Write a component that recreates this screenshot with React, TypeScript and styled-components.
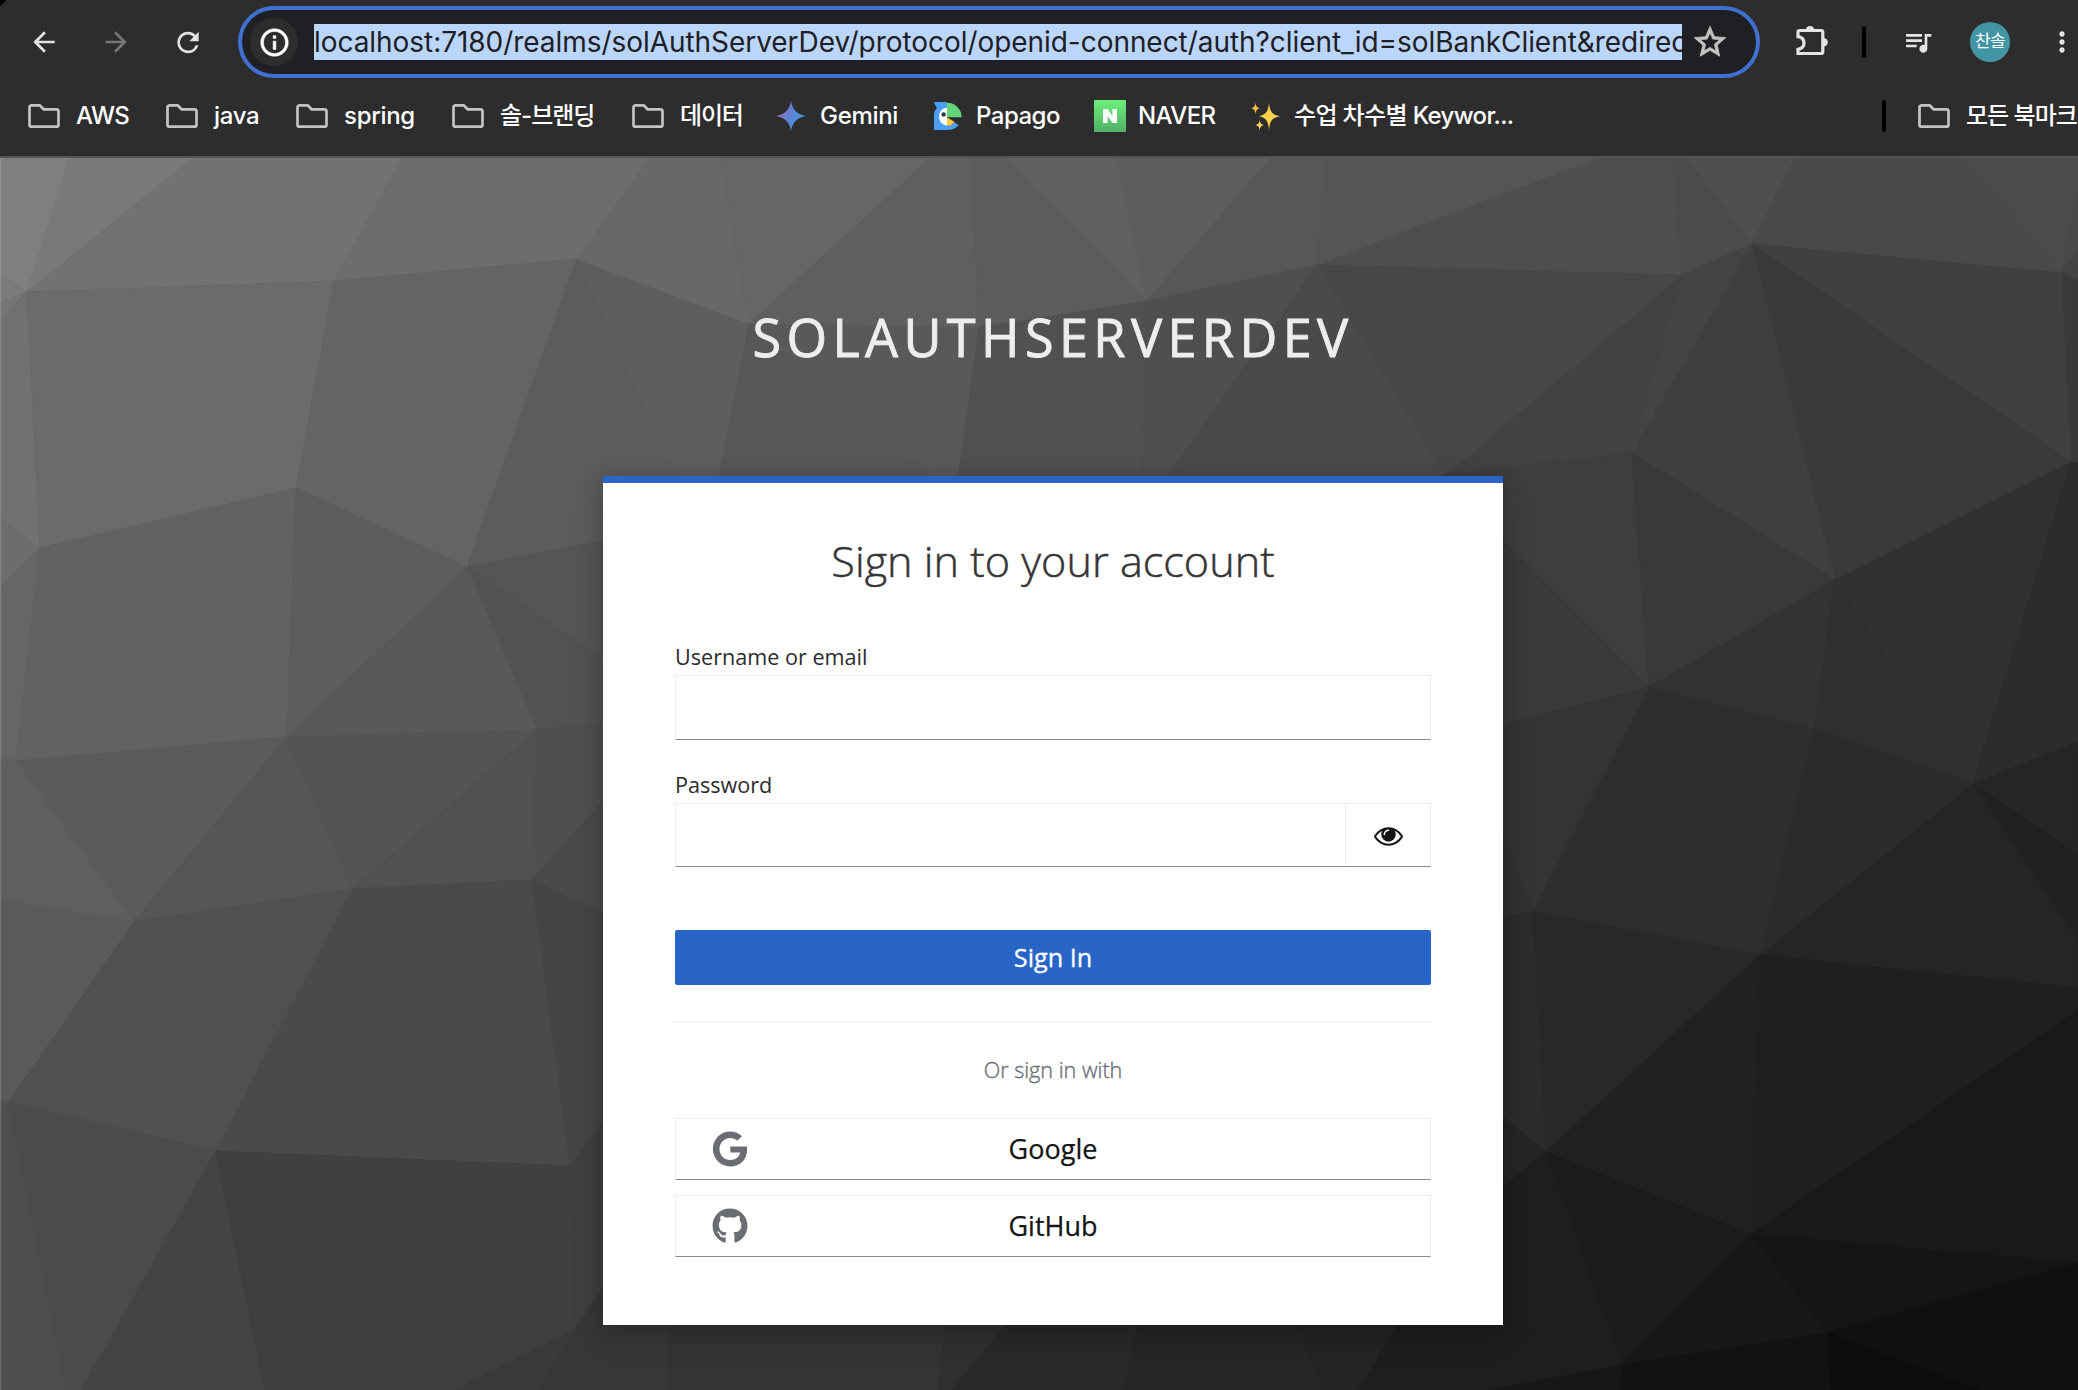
import React from "react";
import styled, { createGlobalStyle } from "styled-components";
import { FaGithub, FaGoogle } from "react-icons/fa";
import {
  MdArrowBack,
  MdArrowForward,
  MdInfoOutline,
  MdMoreVert,
  MdQueueMusic,
  MdRefresh,
  MdStarBorder,
} from "react-icons/md";

const uiFont = `Inter, "Noto Sans CJK KR", sans-serif`;
const pageFont = `"Open Sans", "Noto Sans CJK KR", sans-serif`;

const GlobalStyle = createGlobalStyle`
  * { box-sizing: border-box; }
  html, body { margin: 0; padding: 0; background: #2d2d2d; overflow: hidden; }
  button, input { font: inherit; margin: 0; padding: 0; }
`;

const Window = styled.div`
  width: 2078px;
  height: 1390px;
  display: flex;
  flex-direction: column;
  overflow: hidden;
`;

/* ---------- browser chrome ---------- */

const Chrome = styled.header`
  flex: none;
  height: 158px;
  background: linear-gradient(135deg, #000000 4px, #2d2d2d 5px);
  border-bottom: 2px solid #555555;
  font-family: ${uiFont};
`;

const Toolbar = styled.div`
  height: 84px;
  display: flex;
  align-items: center;
  padding-left: 28px;
`;

const ToolButton = styled.button<{ $dim?: boolean; $gap: number }>`
  flex: none;
  display: flex;
  align-items: center;
  justify-content: center;
  width: 32px;
  height: 32px;
  margin-right: ${(p) => p.$gap}px;
  border: 0;
  background: none;
  color: ${(p) => (p.$dim ? "#757575" : "#e3e3e3")};
`;

const AddressBar = styled.div`
  flex: none;
  width: 1522px;
  height: 72px;
  display: flex;
  align-items: center;
  padding-left: 8px;
  border: 4px solid #3f70d2;
  border-radius: 36px;
  background: #1f2024;
`;

const SiteInfo = styled.div`
  flex: none;
  width: 48px;
  height: 48px;
  display: flex;
  align-items: center;
  justify-content: center;
  border-radius: 50%;
  background: #2d2d2d;
  color: #ffffff;

  svg path:not([fill="none"]) {
    stroke: currentColor;
    stroke-width: 0.4px;
  }
`;

const Url = styled.div`
  flex: none;
  width: 1368px;
  height: 36px;
  margin: 0 9px 0 16px;
  overflow: hidden;
  background: #bad6fb;
  color: #1f2024;
  font-size: 28px;
  line-height: 36px;
  letter-spacing: -0.05px;
  white-space: nowrap;
`;

const StarButton = styled.div`
  display: flex;
  color: #c3c3c3;

  svg path:not([fill="none"]) {
    stroke: currentColor;
    stroke-width: 0.5px;
  }
`;

const Divider = styled.div<{ $left: number; $right: number }>`
  flex: none;
  width: 4px;
  height: 32px;
  margin: 0 ${(p) => p.$right}px 0 ${(p) => p.$left}px;
  border-radius: 2px;
  background: #000000;
`;

const ExtensionSlot = styled.div`
  flex: none;
  display: flex;
  width: 36px;
  margin-left: 34px;
`;

const Avatar = styled.div`
  flex: none;
  width: 40px;
  height: 40px;
  margin: 0 36px 0 36px;
  border-radius: 50%;
  background: #4296a4;
  color: #ffffff;
  font-size: 17px;
  line-height: 39px;
  letter-spacing: -0.6px;
  text-align: center;
`;

const Bookmarks = styled.nav`
  height: 64px;
  display: flex;
  align-items: center;
  padding-left: 28px;
`;

const Bookmark = styled.div<{ $width?: number; $gap?: number; $track?: number }>`
  flex: none;
  display: flex;
  align-items: center;
  gap: ${(p) => p.$gap ?? 16}px;
  width: ${(p) => (p.$width ? `${p.$width}px` : "auto")};
  color: #ffffff;
  font-size: 24px;
  font-weight: 500;
  line-height: 32px;
  letter-spacing: ${(p) => p.$track ?? -0.3}px;
  white-space: nowrap;
`;

const Glyph = styled.svg`
  flex: none;
  display: block;
`;

const Spacer = styled.div`
  flex: 1;
`;

const ExtensionIcon = () => (
  <Glyph width="36" height="40" viewBox="0 0 36 40">
    <path
      d="M5.500 9.500H27.300a1.500 1.500 0 0 1 1.500 1.500V31a1.500 1.500 0 0 1-1.500 1.500H4V28.300C8.500 27.500 10 24.800 10 22s-1.500-5.500-6-6.300V11a1.500 1.500 0 0 1 1.500-1.500z"
      fill="none"
      stroke="#e3e3e3"
      strokeWidth="3.200"
      transform="translate(0 -1)"
    />
    <path d="M12 8a4 4 0 0 1 8 0z" fill="#e3e3e3" />
    <path d="M29.500 16a4.300 4.300 0 0 1 0 8.600z" fill="#e3e3e3" />
  </Glyph>
);

const FolderIcon = () => (
  <Glyph width="32" height="32" viewBox="0 0 32 32">
    <path
      d="M3.5 5.3h8.2l3.9 4h12.9a2 2 0 0 1 2 2v13.4a2 2 0 0 1-2 2h-25a2 2 0 0 1-2-2V7.3a2 2 0 0 1 2-2z"
      fill="none"
      stroke="#c3c3c3"
      strokeWidth="2.7"
    />
  </Glyph>
);

const GeminiIcon = () => (
  <Glyph width="32" height="32" viewBox="0 0 32 32">
    <defs>
      <linearGradient id="gem" x1="0" x2="1" y1="0.3" y2="0.6">
        <stop offset="0" stopColor="#a06db4" />
        <stop offset="0.5" stopColor="#5b83d6" />
        <stop offset="1" stopColor="#45a0e0" />
      </linearGradient>
    </defs>
    <path
      d="M15 1C16.300 9.500 21.500 14.700 30 16 21.500 17.300 16.300 22.500 15 31 13.700 22.500 8.500 17.300 0 16 8.500 14.700 13.700 9.500 15 1z"
      fill="url(#gem)"
    />
  </Glyph>
);

const PapagoIcon = () => (
  <Glyph width="32" height="32" viewBox="0 0 32 32">
    <path d="M2 2H15V30H2V14Q2.500 10 5 8 3 5.500 2 2z" fill="#4a9ff5" />
    <path d="M14.500 30V25.300H19L22.500 22.500 26.800 25Q23 30 14.500 30z" fill="#4a9ff5" />
    <path d="M15 7.500a8 9 0 0 0 0 18z" fill="#ffffff" />
    <path d="M15 2.700a14.500 14.500 0 0 1 14.700 14.500H15z" fill="#63d477" />
    <path d="M15 17.200l7.700 4.800-3.700 3.500H15z" fill="#f7c844" />
    <circle cx="11.600" cy="14.500" r="2.200" fill="#2c3a4d" />
  </Glyph>
);

const NaverTile = styled.span`
  flex: none;
  width: 32px;
  height: 32px;
  display: flex;
  align-items: center;
  justify-content: center;
  border-radius: 1px;
  background: linear-gradient(#6df07a, #50b168);
`;

const SparkleIcon = () => (
  <Glyph width="32" height="32" viewBox="0 0 32 32">
    <path d="M19 2.500c.8 9 3 12.300 11 13.700-8 1.400-10.200 4.700-11 13.700-.8-9-3-12.300-10-13.700 7-1.400 9.200-4.700 10-13.700z" fill="#fbd34b" />
    <path d="M5.500 2c.4 4.200 1.300 5.500 4.500 6.300-3.200.8-4.100 2.100-4.500 6.300-.4-4.200-1.300-5.500-4.500-6.300 3.200-.8 4.100-2.100 4.500-6.300z" fill="#f6b94a" />
    <path d="M9.700 19.500c.4 3.700 1.300 4.700 4.300 5.500-3 .8-3.900 1.800-4.300 5.800-.4-4-1.300-5-4.300-5.800 3-.8 3.900-1.800 4.300-5.500z" fill="#f8cf55" />
  </Glyph>
);

/* ---------- faceted backdrop ---------- */

// Each facet: grey level, then the polygon's corners in window coordinates.
const facets: [string, string][] = [
  ["7f7f7f", "0,150 72,150 27,291 0,273"],
  ["7b7b7b", "0,273 27,291 0,302"],
  ["797979", "72,150 202,150 27,291"],
  ["727272", "202,150 406,150 334,280 27,291"],
  ["6d6d6d", "406,150 655,150 577,258 334,280"],
  ["757575", "0,302 27,291 0,320"],
  ["717171", "0,320 27,291 40,547 0,517"],
  ["6b6b6b", "27,291 334,280 296,487 40,547"],
  ["646464", "334,280 577,258 467,566 296,487"],
  ["6d6d6d", "0,517 40,547 0,586"],
  ["666666", "0,586 40,547 16,760 0,755"],
  ["626262", "40,547 296,487 287,736 16,760"],
  ["5d5d5d", "296,487 467,566 287,736"],
  ["5c5c5c", "577,258 690,500 650,531 467,566"],
  ["5e5e5e", "577,258 749,323 717,500 688,500"],
  ["555555", "467,566 650,531 650,690"],
  ["525252", "467,566 650,690 650,718 537,729"],
  ["595959", "467,566 537,729 287,736"],
  ["5b5b5b", "16,760 287,736 134,921"],
  ["606060", "0,755 16,760 0,772"],
  ["5f5f5f", "0,772 16,760 134,921 0,899"],
  ["565656", "287,736 353,888 134,921"],
  ["545454", "287,736 537,729 353,888"],
  ["515151", "537,729 532,879 353,888"],
  ["4f4f4f", "537,729 650,718 650,748 532,879"],
  ["4a4a4a", "532,879 650,748 650,935"],
  ["5a5a5a", "0,899 134,921 9,1101 0,1100"],
  ["525252", "0,1100 9,1101 0,1118"],
  ["515151", "134,921 9,1101 216,1150"],
  ["505050", "134,921 353,888 216,1150"],
  ["4a4a4a", "353,888 532,879 570,1165 216,1150"],
  ["454545", "532,879 650,935 650,1059 570,1165"],
  ["4e4e4e", "0,1118 9,1101 66,1390 0,1390"],
  ["4b4b4b", "9,1101 216,1150 81,1390 66,1390"],
  ["444444", "216,1150 81,1390 265,1390"],
  ["3f3f3f", "216,1150 265,1390 453,1390 576,1328"],
  ["404040", "216,1150 570,1165 576,1328"],
  ["3f3f3f", "570,1165 650,1059 650,1214 576,1328"],
  ["3a3a3a", "453,1390 576,1328 538,1390"],
  ["373737", "538,1390 576,1328 650,1214 669,1300 668,1390"],
  ["343434", "669,1300 949,1300 938,1390 668,1390"],
  ["303030", "949,1300 1026,1300 951,1390 938,1390"],
  ["292929", "1026,1300 1142,1300 1124,1390 951,1390"],
  ["262626", "1142,1300 1286,1300 1325,1390 1124,1390"],
  ["242424", "1286,1300 1413,1300 1358,1390 1325,1390"],
  ["1e1e1e", "1413,1300 1622,1300 1622,1364 1486,1390 1358,1390"],
  ["686868", "655,150 719,150 749,323 577,258"],
  ["666666", "719,150 938,150 749,323"],
  ["5f5f5f", "938,150 971,150 979,327 749,323"],
  ["5c5c5c", "971,150 998,150 1147,300 979,327"],
  ["606060", "998,150 1117,150 1147,300"],
  ["5d5d5d", "1117,150 1277,150 1147,300"],
  ["575757", "1277,150 1328,150 1317,264 1147,300"],
  ["4e4e4e", "1540,150 1672,150 1682,274 1317,264 1440,200"],
  ["555555", "1328,150 1618,150 1596,158 1480,201 1317,264"],
  ["4b4b4b", "1672,150 1681,150 1752,243 1682,274"],
  ["4f4f4f", "1681,150 1799,150 1752,243"],
  ["494949", "1799,150 1957,150 2061,272 1752,243"],
  ["4b4b4b", "1957,150 2078,150 2078,190 2061,272"],
  ["494949", "2078,190 2078,248 2061,272"],
  ["434343", "2061,272 2078,248 2078,279"],
  ["393939", "2061,272 2078,279 2078,462 2071,461"],
  ["404040", "1752,243 2061,272 2071,461"],
  ["3a3a3a", "1752,243 2071,461 1835,579"],
  ["3f3f3f", "1752,243 1835,579 1632,452"],
  ["444444", "1682,274 1752,243 1632,452"],
  ["424242", "1682,274 1632,452 1445,475 1440,472"],
  ["474747", "1317,264 1682,274 1480,445 1443,476"],
  ["575757", "749,323 940,475 940,500 714,500"],
  ["595959", "749,323 979,327 955,500 940,480"],
  ["515151", "979,327 1147,300 1141,500 955,500"],
  ["4f4f4f", "1147,300 1317,264 1150,500 1141,500"],
  ["4a4a4a", "1317,264 1443,474 1443,500 1150,500"],
  ["3e3e3e", "1443,474 1632,452 1649,686 1440,478"],
  ["3a3a3a", "1480,516 1649,686 1480,730"],
  ["393939", "1632,452 1835,579 1649,686"],
  ["333333", "1649,686 1835,579 1814,728"],
  ["2f2f2f", "1835,579 1973,783 1814,728"],
  ["313131", "1835,579 2071,461 1973,783"],
  ["2c2c2c", "2071,461 2078,462 2078,741 1973,783"],
  ["252525", "1973,783 2078,741 2078,854"],
  ["212121", "1973,783 2078,854 2078,940"],
  ["252525", "1973,783 2078,940 2078,987 1760,954"],
  ["2b2b2b", "1814,728 1973,783 1760,954"],
  ["2e2e2e", "1649,686 1814,728 1760,954 1533,910"],
  ["343434", "1480,730 1649,686 1533,910 1480,780"],
  ["323232", "1480,780 1533,910 1480,921"],
  ["2c2c2c", "1533,910 1546,1151 1480,1097 1480,921"],
  ["282828", "1533,910 1760,954 1546,1151"],
  ["252525", "1480,1097 1546,1151 1480,1205"],
  ["212121", "1760,954 1546,1151 1751,1233"],
  ["1f1f1f", "1760,954 2078,987 2078,1009 1751,1233"],
  ["191919", "1751,1233 2078,1009 2078,1262"],
  ["1b1b1b", "1546,1151 1751,1233 1622,1364"],
  ["1e1e1e", "1480,1205 1546,1151 1622,1364 1480,1310"],
  ["181818", "1751,1233 1827,1332 1622,1364"],
  ["151515", "1751,1233 2078,1262 1827,1332"],
  ["101010", "1827,1332 2078,1262 2078,1390 1982,1390"],
  ["0c0c0c", "1827,1332 1982,1390 1831,1390"],
  ["121212", "1827,1332 1831,1390 1620,1390 1622,1364"],
  ["171717", "1622,1364 1620,1390 1486,1390"],
];

const Page = styled.main`
  position: relative;
  flex: 1;
  display: flex;
  flex-direction: column;
  align-items: center;
  padding: 143px 0 0 28px;
  font-family: ${pageFont};
`;

const BackdropSvg = styled.svg`
  position: absolute;
  inset: 0;
  width: 100%;
  height: 100%;
`;

const Backdrop = () => (
  <BackdropSvg viewBox="0 157 2078 1232" preserveAspectRatio="none">
    {facets.map(([tone, points], i) => (
      <polygon key={i} points={points} fill={`#${tone}`} stroke={`#${tone}`} strokeWidth="0.8" />
    ))}
    <rect x="0" y="157" width="1.200" height="1233" fill="#ffffff" opacity="0.16" />
  </BackdropSvg>
);

const RealmName = styled.div`
  position: relative;
  height: 72px;
  color: #ededed;
  font-size: 52.2px;
  line-height: 72px;
  letter-spacing: 5.4px;
  text-transform: uppercase;
  white-space: nowrap;
  -webkit-text-stroke: 0.9px #ededed;
`;

const Card = styled.section`
  position: relative;
  width: 900px;
  height: 849px;
  margin-top: 103px;
  padding: 50px 72px 0;
  border-top: 7px solid #2965c7;
  background: #ffffff;
  box-shadow: 0 14px 29px rgba(3, 3, 3, 0.16), 0 0 20px rgba(3, 3, 3, 0.14);
  color: #2c2c2c;
`;

const CardTitle = styled.h1`
  height: 56px;
  margin: 0 0 53px;
  color: #363636;
  font-size: 43.2px;
  font-weight: 300;
  line-height: 56px;
  text-align: center;
  -webkit-text-stroke: 0.5px #363636;
`;

const Field = styled.div<{ $after: number }>`
  display: flex;
  flex-direction: column;
  gap: 3px;
  margin-bottom: ${(p) => p.$after}px;
`;

const Label = styled.label`
  height: 30px;
  font-size: 21.6px;
  line-height: 30px;
`;

const InputRow = styled.div<{ $height: number }>`
  display: flex;
  height: ${(p) => p.$height}px;
  border: 1px solid #ededed;
  border-bottom-color: #8a8d90;
`;

const TextInput = styled.input`
  flex: 1;
  min-width: 0;
  border: 0;
  background: #ffffff;
`;

const RevealButton = styled.button`
  width: 85px;
  display: flex;
  align-items: center;
  justify-content: center;
  padding-top: 2px;
  border: 0;
  border-left: 1px solid #ededed;
  background: #ffffff;
`;

const SubmitButton = styled.button`
  display: block;
  width: 100%;
  height: 55px;
  border: 0;
  border-radius: 2px;
  background: #2965c7;
  color: #ffffff;
  font-size: 25.2px;
  line-height: 55px;
  -webkit-text-stroke: 0.3px #ffffff;
`;

const Rule = styled.hr`
  height: 1px;
  margin: 36px 0 33px;
  border: 0;
  background: #ededed;
`;

const SocialCaption = styled.h2`
  height: 30px;
  margin: 0 0 33px;
  color: #6a6e73;
  font-size: 21.6px;
  font-weight: 300;
  line-height: 30px;
  text-align: center;
  -webkit-text-stroke: 0.35px #6a6e73;
`;

const SocialList = styled.div`
  display: flex;
  flex-direction: column;
  gap: 15px;
`;

const SocialButton = styled.a`
  height: 62px;
  display: grid;
  grid-template-columns: 36px 1fr 36px;
  align-items: center;
  padding: 0 36px;
  border: 1px solid #ededed;
  border-bottom-color: #8a8d90;
  color: #151515;
  font-size: 27px;
  line-height: 58px;
  text-align: center;
  -webkit-text-stroke: 0.25px #151515;

  svg {
    color: #6a6e73;
  }
`;

const EyeIcon = () => (
  <Glyph width="29" height="29" viewBox="0 64 1792 1792">
    <path
      fill="#151515"
      d="M1664 960q-152-236-381-353 61 104 61 225 0 185-131.500 316.500t-316.500 131.500-316.500-131.500-131.500-316.500q0-121 61-225-229 117-381 353 133 205 333.500 326.500t434.500 121.500 434.500-121.500 333.500-326.500zm-720-384q0-20-14-34t-34-14q-125 0-214.500 89.500t-89.500 214.500q0 20 14 34t34 14 34-14 14-34q0-86 61-147t147-61q20 0 34-14t14-34zm848 384q0 34-20 69-140 230-376.500 368.500t-499.500 138.500-499.500-139-376.500-368q-20-35-20-69t20-69q140-229 376.500-368t499.500-139 499.500 139 376.500 368q20 35 20 69z"
    />
  </Glyph>
);

const App = () => (
  <Window>
    <GlobalStyle />
    <Chrome>
      <Toolbar>
        <ToolButton $gap={40}><MdArrowBack size={34} /></ToolButton>
        <ToolButton $gap={40} $dim><MdArrowForward size={34} /></ToolButton>
        <ToolButton $gap={34}><MdRefresh size={37} /></ToolButton>
        <AddressBar>
          <SiteInfo><MdInfoOutline size={33} /></SiteInfo>
          <Url>localhost:7180/realms/solAuthServerDev/protocol/openid-connect/auth?client_id=solBankClient&amp;redirec</Url>
          <StarButton><MdStarBorder size={38} /></StarButton>
        </AddressBar>
        <ExtensionSlot><ExtensionIcon /></ExtensionSlot>
        <Divider $left={32} $right={36} />
        <ToolButton $gap={0}><MdQueueMusic size={38} /></ToolButton>
        <Avatar>찬솔</Avatar>
        <ToolButton $gap={0}><MdMoreVert size={42} /></ToolButton>
      </Toolbar>
      <Bookmarks>
        <Bookmark $width={138} $track={-0.6}><FolderIcon />AWS</Bookmark>
        <Bookmark $width={130}><FolderIcon />java</Bookmark>
        <Bookmark $width={156}><FolderIcon />spring</Bookmark>
        <Bookmark $width={180} $track={-1}><FolderIcon />솔-브랜딩</Bookmark>
        <Bookmark $width={144} $track={-1.2}><FolderIcon />데이터</Bookmark>
        <Bookmark $width={156} $gap={12}><GeminiIcon />Gemini</Bookmark>
        <Bookmark $width={162} $gap={12} $track={-0.5}><PapagoIcon />Papago</Bookmark>
        <Bookmark $width={156} $gap={12} $track={-0.6}>
          <NaverTile>
            <Glyph width="14" height="14" viewBox="0 0 14 14">
              <path d="M0 0h4.600l4.800 7V0H14v14H9.400L4.600 7v7H0z" fill="#fff" />
            </Glyph>
          </NaverTile>
          NAVER
        </Bookmark>
        <Bookmark $gap={12} $track={-0.65}><SparkleIcon />수업 차수별 Keywor...</Bookmark>
        <Spacer />
        <Divider $left={0} $right={32} />
        <Bookmark $width={160} $track={-1}><FolderIcon />모든 북마크</Bookmark>
      </Bookmarks>
    </Chrome>
    <Page>
      <Backdrop />
      <RealmName>solAuthServerDev</RealmName>
      <Card>
        <CardTitle>Sign in to your account</CardTitle>
        <Field $after={30}>
          <Label htmlFor="username">Username or email</Label>
          <InputRow $height={65}><TextInput id="username" /></InputRow>
        </Field>
        <Field $after={63}>
          <Label htmlFor="password">Password</Label>
          <InputRow $height={64}>
            <TextInput id="password" type="password" />
            <RevealButton><EyeIcon /></RevealButton>
          </InputRow>
        </Field>
        <SubmitButton>Sign In</SubmitButton>
        <Rule />
        <SocialCaption>Or sign in with</SocialCaption>
        <SocialList>
          <SocialButton><FaGoogle size={36} /><span>Google</span></SocialButton>
          <SocialButton><FaGithub size={36} /><span>GitHub</span></SocialButton>
        </SocialList>
      </Card>
    </Page>
  </Window>
);

export default App;
